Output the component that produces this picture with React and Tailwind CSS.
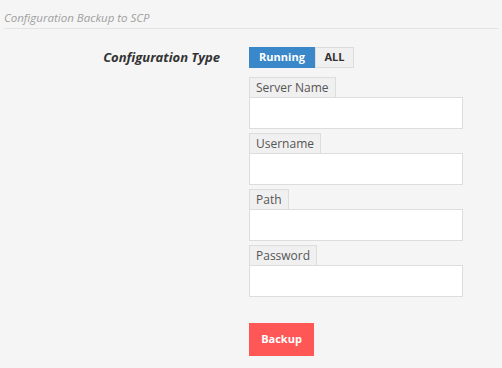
import { useState } from 'react';

const fields = ['Server Name', 'Username', 'Path', 'Password'];

const App = () => {
  const [configType, setConfigType] = useState('running');
  const [values, setValues] = useState({});

  const font = { fontFamily: '"Open Sans", "Noto Sans", sans-serif' };

  return (
    <div className="w-[502px] h-[368px] bg-[#f5f5f5] overflow-hidden" style={font}>
      {/* Title */}
      <div className="px-[4px] pt-[10px]">
        <div className="text-[11.5px] italic text-[#a0a0a0] leading-[15px]">Configuration Backup to SCP</div>
        <div className="mt-[3px] border-b border-[#e3e3e3]"></div>
      </div>

      <div className="flex mt-[18px]">
        {/* Label column */}
        <div className="w-[220px] flex justify-end pt-[2px]">
          <span className="text-[13px] font-bold italic text-[#333] leading-[17px]">Configuration Type</span>
        </div>

        {/* Controls column */}
        <div className="ml-[29px] flex flex-col">
          <div className="flex h-[21px]">
            <button
              type="button"
              onClick={() => setConfigType('running')}
              className={`w-[66px] text-[11px] font-bold border ${configType === 'running' ? 'bg-[#3a87c9] text-white border-[#3a87c9]' : 'bg-[#f0f0f0] text-[#333] border-[#dcdcdc]'}`}
            >
              Running
            </button>
            <button
              type="button"
              onClick={() => setConfigType('all')}
              className={`w-[39px] text-[11px] font-bold border ${configType === 'all' ? 'bg-[#3a87c9] text-white border-[#3a87c9]' : 'bg-[#f0f0f0] text-[#333] border-[#dcdcdc]'}`}
            >
              ALL
            </button>
          </div>

          <div className="flex flex-col gap-[4px] mt-[9px]">
            {fields.map((name) => (
              <div key={name} className="flex flex-col items-start">
                <span className="h-[20px] px-[6px] bg-[#f0f0f0] border border-b-0 border-[#dddddd] text-[12px] text-[#555] leading-[19px]">
                  {name}
                </span>
                <input
                  type={name === 'Password' ? 'password' : 'text'}
                  value={values[name] || ''}
                  onChange={(e) => setValues({ ...values, [name]: e.target.value })}
                  className="w-[214px] h-[32px] bg-white border border-[#dddddd] outline-none px-2 text-[11px]"
                />
              </div>
            ))}
          </div>

          <button
            type="button"
            className="mt-[26px] w-[65px] h-[33px] bg-[#ff5656] text-white text-[11px] font-bold"
          >
            Backup
          </button>
        </div>
      </div>
    </div>
  );
};

export default App;
